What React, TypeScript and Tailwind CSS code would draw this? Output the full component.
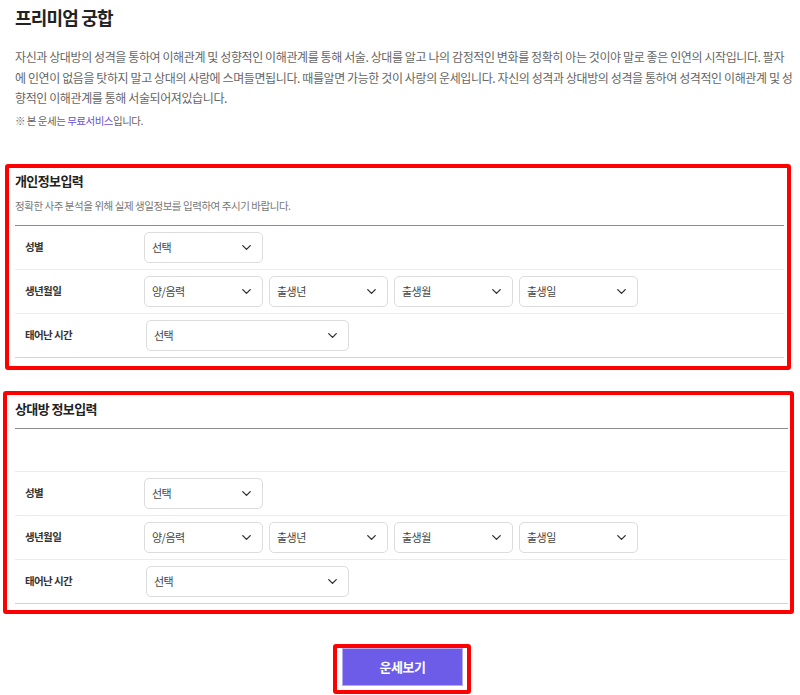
import { ChevronDown } from "lucide-react";
import type { ReactNode } from "react";

function Select({ text, className = "w-[119px]" }: { text: string; className?: string }) {
  return (
    <div
      className={`flex h-[31px] items-center justify-between rounded-[5px] border border-[#dcdcdc] bg-white pl-[7px] pr-[8px] ${className}`}
    >
      <span className="text-[11px] tracking-[-0.5px] text-[#444]">{text}</span>
      <ChevronDown size={15} strokeWidth={2.2} className="text-[#333]" />
    </div>
  );
}

function Row({ label, last, children }: { label: string; last?: boolean; children: ReactNode }) {
  return (
    <div
      className={`flex h-[44px] items-center border-b ${last ? "border-[#d2d2d2]" : "border-[#ececec]"}`}
    >
      <div className="w-[129px] pl-[10px] text-[10.5px] font-bold tracking-[-0.6px] text-[#333]">
        {label}
      </div>
      {children}
    </div>
  );
}

function FormRows() {
  return (
    <>
      <Row label="성별">
        <Select text="선택" />
      </Row>
      <Row label="생년월일">
        <div className="flex gap-[6px]">
          <Select text="양/음력" />
          <Select text="출생년" />
          <Select text="출생월" />
          <Select text="출생일" />
        </div>
      </Row>
      <Row label="태어난 시간" last>
        <Select text="선택" className="ml-[2px] w-[203px]" />
      </Row>
    </>
  );
}

export default function App() {
  return (
    <div className="min-h-[695px] w-[800px] bg-white font-['Noto_Sans_CJK_KR','Noto_Sans',sans-serif] text-[#333]">
      <header className="px-[15px] pt-[5px]">
        <h1 className="text-[18px] font-bold leading-[24px] tracking-[-0.8px] text-[#222]">
          프리미엄 궁합
        </h1>
        <p className="mt-[18px] whitespace-nowrap text-[12px] leading-[20.5px] tracking-[-0.4px] text-[#666]">
          <span className="block">
            자신과 상대방의 성격을 통하여 이해관계 및 성향적인 이해관계를 통해 서술. 상대를 알고 나의 감정적인 변화를 정확히 아는 것이야 말로 좋은 인연의 시작입니다. 팔자
          </span>
          <span className="block">
            에 인연이 없음을 탓하지 말고 상대의 사랑에 스며들면됩니다. 때를알면 가능한 것이 사랑의 운세입니다. 자신의 성격과 상대방의 성격을 통하여 성격적인 이해관계 및 성
          </span>
          <span className="block">향적인 이해관계를 통해 서술되어져있습니다.</span>
        </p>
        <p className="mt-[4px] text-[10.5px] leading-[16px] tracking-[-0.5px] text-[#666]">
          ※ 본 운세는 <span className="text-[#6a4fd0]">무료서비스</span>입니다.
        </p>
      </header>

      <section className="ml-[5px] mt-[35px] w-[786px] rounded-[3px] border-4 border-[#ff0000] pb-[8px] pl-[6px] pr-[3px] pt-[4px]">
        <h2 className="text-[13px] font-bold leading-[18px] tracking-[-0.6px] text-[#222]">
          개인정보입력
        </h2>
        <p className="mt-[8px] text-[10.5px] leading-[16px] tracking-[-0.45px] text-[#777]">
          정확한 사주 분석을 위해 실제 생일정보를 입력하여 주시기 바랍니다.
        </p>
        <div className="mt-[11px] border-t border-[#8c8c8c]">
          <FormRows />
        </div>
      </section>

      <section className="ml-[3px] mt-[21px] w-[791px] rounded-[3px] border-4 border-[#ff0000] pb-[6px] pl-[8px] pr-[2px] pt-[5px]">
        <h2 className="text-[13px] font-bold leading-[18px] tracking-[-0.6px] text-[#222]">
          상대방 정보입력
        </h2>
        <div className="mt-[10px] border-t border-[#8c8c8c]">
          <div className="h-[43px] border-b border-[#ececec]" />
          <FormRows />
        </div>
      </section>

      <div className="mt-[30px] flex justify-center pl-[4px]">
        <div className="rounded-[3px] border-4 border-[#ff0000] pb-[4px] pl-[5px] pr-[4px]">
          <button className="flex h-[38px] w-[121px] items-center justify-center border border-[#b4abf1] bg-[#6c5ce7] text-[13px] font-bold tracking-[-0.4px] text-white">
            운세보기
          </button>
        </div>
      </div>
    </div>
  );
}
